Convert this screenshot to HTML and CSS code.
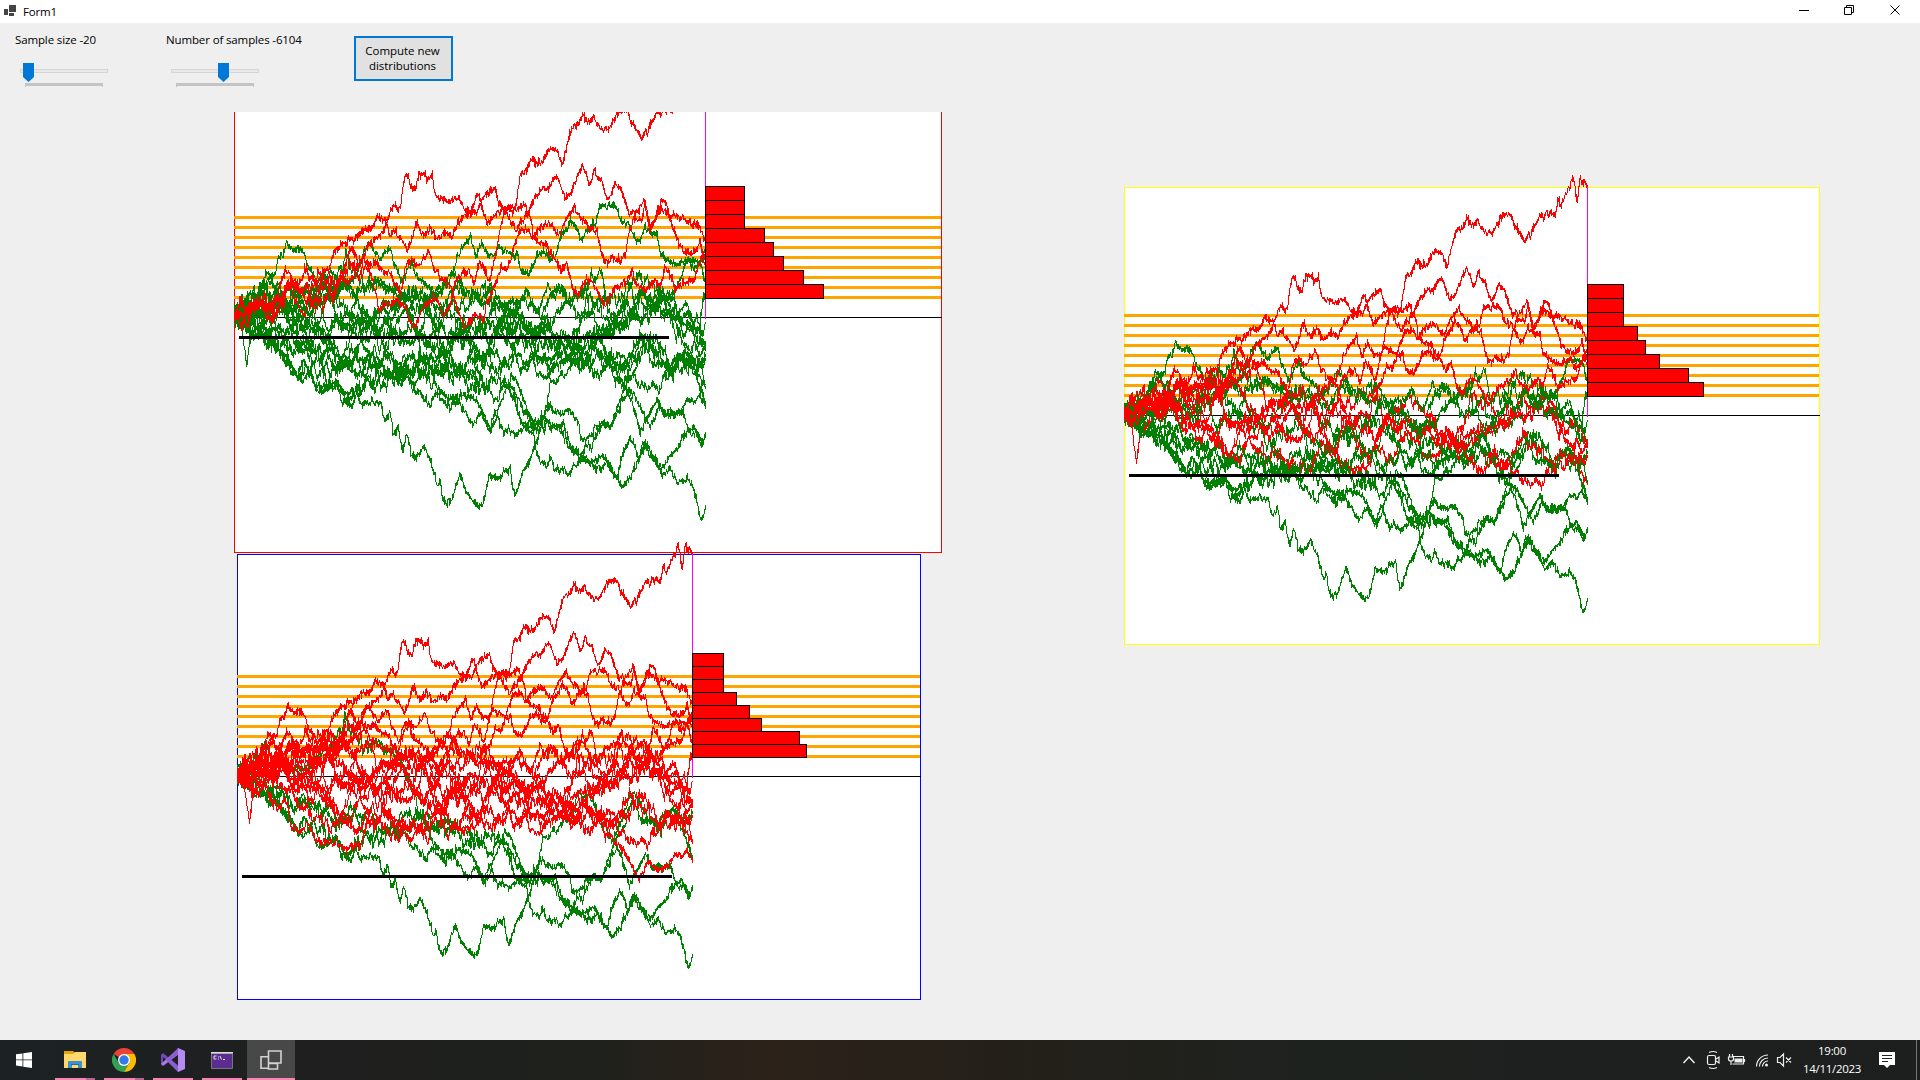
FILE: index.html
```html
<!DOCTYPE html>
<html lang="en">
<head>
<meta charset="utf-8">
<title>Form1</title>
<link rel="stylesheet" href="styles.css">
</head>
<body>
<header class="titlebar">
  <svg class="app-icon" width="14" height="12" viewBox="0 0 14 12"><path fill="#444" d="M0 4h4v6H0zM5 0h7v7H5zM5 8h5v3H5z"/></svg>
  <span class="caption">Form1</span>
  <div class="window-buttons">
    <svg width="46" height="22" viewBox="0 0 46 22"><path d="M17 10.5h10" stroke="#000" fill="none"/></svg>
    <svg width="46" height="22" viewBox="0 0 46 22"><path d="M16.500 7.500h7v7h-7zM18.500 7.500v-2h7v7h-2" stroke="#000" fill="none"/></svg>
    <svg width="46" height="22" viewBox="0 0 46 22"><path d="M16.500 5.500l9 9m0-9l-9 9" stroke="#000" fill="none"/></svg>
  </div>
</header>
<main class="form">
  <section class="controls">
    <div class="field field-size">
      <label class="lbl">Sample size -20</label>
      <svg class="slider" width="90" height="26" viewBox="0 0 90 26"><rect x=".5" y="6.500" width="87" height="3" fill="#e7eaea" stroke="#d6d6d6"/><path d="M5 20h78v4h-1v-1H6v1H5z" fill="#c4c4c4"/><path d="M3 0h11v14l-5.500 5L3 14z" fill="#0078d7"/></svg>
    </div>
    <div class="field field-count">
      <label class="lbl lbl-count">Number of samples -6104</label>
      <svg class="slider" width="90" height="26" viewBox="0 0 90 26"><rect x=".5" y="6.500" width="87" height="3" fill="#e7eaea" stroke="#d6d6d6"/><path d="M5 20h78v4h-1v-1H6v1H5z" fill="#c4c4c4"/><path d="M47 0h11v14l-5.500 5L47 14z" fill="#0078d7"/></svg>
    </div>
    <button class="compute">Compute new<br>distributions</button>
  </section>
  <svg id="plots" class="plots" width="1920" height="928" viewBox="0 112 1920 928" shape-rendering="crispEdges"></svg>
</main>
<footer class="taskbar">
  <div class="tasks">
    <div class="task start"><svg width="16" height="16" viewBox="0 0 16 16"><path fill="#fff" d="M0 2.300L6.500 1.400V7.500H0zM7.300 1.300L16 0v7.500H7.300zM0 8.300h6.500v6.200L0 13.600zM7.300 8.300H16V16l-8.700-1.300z"/></svg></div>
    <div class="task multi"><svg width="22" height="20" viewBox="0 0 22 20"><path fill="#e5a50a" d="M0 1h9l2 2v4H0z"/><path fill="#ffd76b" d="M0 4h9l2-2h11v16H0z"/><path fill="#3b91d6" d="M4 18v-6q0-1 1-1h12q1 0 1 1v6h-4v-3H8v3z"/><path fill="#1b6cb5" d="M7 14h8v1H7z"/></svg></div>
    <div class="task multi"><svg width="24" height="24" viewBox="0 0 24 24"><path fill="#ea4335" d="M12 12L1.600 6A12 12 0 0 1 22.400 6z"/><path fill="#34a053" d="M6.800 15L12 17.500 17.200 15 12 24A12 12 0 0 1 1.600 6z"/><path fill="#fbbc05" d="M12 6h10.400A12 12 0 0 1 12 24l5.200-9z"/><circle cx="12" cy="12" r="6" fill="#fff"/><circle cx="12" cy="12" r="4.700" fill="#3578ea"/></svg></div>
    <div class="task single"><svg width="24" height="24" viewBox="0 0 24 24"><path fill="#7049b5" d="M0 7l2-2 16 13v6L2 9v8l-2-1z"/><path fill="#a77ce8" d="M0 16l2 2 16-12V0L2 14z"/><path fill="#8b5fd0" d="M5 12L17 0v6l-7 6 7 6v6z"/><path fill="#b58bf0" d="M17 0l7 3v18l-7 3z"/></svg></div>
    <div class="task single"><svg width="22" height="17" viewBox="0 0 22 17"><path fill="#5c2d91" stroke="#777" d="M.5 1.500h21v15H.5z"/><path fill="#ddd" d="M0 0h22v1.500H0z"/><path stroke="#ddd" fill="none" d="M5.500 4H3v3h2.500M7.500 4.500v1M7.500 6.500v1M9 4l1.500 3.500M12 7.500h2"/></svg></div>
    <div class="task active"><svg width="22" height="20" viewBox="0 0 22 20"><path stroke="#d2d2d2" stroke-width="1.600" fill="none" d="M8.500 1h12.500v12H8.500zM8 6.800H1v11.500h7.500M8 13.500h9.500v5.500H8.500v-6"/></svg></div>
  </div>
  <div class="tray">
    <svg class="tray-icons" width="113" height="24" viewBox="0 0 113 24" fill="none" stroke="#eee" stroke-width="1.200">
      <path stroke-width="1.500" d="M3.500 15l5.500-6 5.500 6"/>
      <path d="M29 7.500h5q1.500 0 1.500 1.500v6q0 1.500-1.500 1.500h-5q-1.500 0-1.500-1.500V9q0-1.500 1.500-1.500zM36 11l3-2v6l-3-2M29 4.500q4-2 8 0M29 19.500q4 2 8 0"/>
      <path d="M53 8.500h10.500v7.500H52.500M64.500 11v3"/><path fill="#eee" stroke="none" d="M54.500 10.500h8v4h-8z"/><path d="M49.500 6v3M52.500 6v3M48.500 9h5v2q0 2-2.500 2t-2.500-2zM51 13v4"/>
      <path d="M76.500 18.500A11.500 11.500 0 0 1 88 7M79.500 18.500A8.500 8.500 0 0 1 88 10M82.500 18.500A5.500 5.500 0 0 1 88 13"/><circle cx="86.500" cy="17" r="1.500" fill="#eee" stroke="none"/>
      <path d="M97.500 9.500h2.500l3.500-3.500v12l-3.500-3.500h-2.500zM106 9.500l5 5m0-5l-5 5"/>
    </svg>
    <div class="clock"><span>19:00</span><span>14/11/2023</span></div>
    <svg class="notice" width="16" height="16" viewBox="0 0 16 16"><path fill="#fff" d="M0 0h16v13h-5l-3 3-3-3H0z"/><path stroke="#222" d="M3 3.500h10M3 6.500h10M3 9.500h6"/></svg>
    <span class="show-desktop"></span>
  </div>
</footer>
<script src="plots.js"></script>
</body>
</html>
```
FILE: styles.css
```css
* { box-sizing: border-box; }
body {
  margin: 0;
  width: 1920px;
  height: 1080px;
  overflow: hidden;
  display: flex;
  flex-direction: column;
  background: #efefef;
  color: #000;
  font: 12px/15px "Open Sans", "Noto Sans", sans-serif;
}
svg { display: block; flex: none; }
.titlebar {
  height: 23px;
  flex: none;
  display: flex;
  background: #fff;
}
.app-icon { margin: 5px 5px 0 4px; }
.caption { padding-top: 4px; font-size: 11.5px; letter-spacing: -0.2px; }
.window-buttons { display: flex; margin-left: auto; }
.form { height: 1017px; flex: none; }
.controls { height: 89px; display: flex; align-items: flex-start; }
.field { padding-top: 9px; }
.field-size { width: 151px; padding-left: 15px; }
.field-count { width: 203px; padding-left: 15px; }
.lbl {
  display: block;
  height: 15px;
  white-space: nowrap;
  font-size: 11.5px;
  letter-spacing: -0.13px;
}
.slider { margin: 16px 0 0 5px; }
.compute {
  width: 99px;
  height: 45px;
  margin-top: 13px;
  padding: 0 2px 2px 0;
  border: 2px solid #0078d7;
  background: #e1e1e1;
  color: #000;
  font: 11.5px/15px "Open Sans", "Noto Sans", sans-serif;
  letter-spacing: -0.05px;
}
.plots { overflow: hidden; }
.taskbar {
  height: 40px;
  flex: none;
  display: flex;
  justify-content: space-between;
  background: linear-gradient(90deg, #1c2224 0, #1f1f1f 16%, #1e211c 30%, #2c221a 40%, #242019 52%, #1e221f 68%, #1d1f1e 100%);
  color: #fff;
}
.tasks { display: flex; gap: 1px; }
.task {
  width: 48px;
  height: 40px;
  display: flex;
  align-items: center;
  justify-content: center;
  border-bottom: 2px solid transparent;
  padding-top: 2px;
}
.task.start { width: 50px; padding-right: 2px; }
.single { background: linear-gradient(#f884b4, #f884b4) 4px 38px / 40px 2px no-repeat border-box; }
.multi { background: linear-gradient(90deg, #f884b4 31px, #b8688f 31px) 4px 38px / 40px 2px no-repeat border-box; }
.task.active { background: #484848; border-bottom-color: #f884b4; }
.tray { display: flex; align-items: center; }
.tray-icons { margin-right: 3px; }
.clock {
  width: 72px;
  display: flex;
  flex-direction: column;
  align-items: center;
  font-size: 11.5px;
  line-height: 18px;
  letter-spacing: -0.3px;
  margin-right: 11px;
}
.notice { margin-right: 21px; }
.show-desktop { width: 4px; height: 40px; border-left: 1px solid #777; }
```
FILE: plots.js
```js
// Each walk: colour in the red, yellow and blue plot, then "x,y" knots
// (three units per pixel; x runs 42..1456, the axis sits at y = 652).
const walks = [
["ggg","42,660 100,690 160,720 200,770 230,830 270,820 285,870 310,880 345,840 370,890 395,910 410,870 425,920 455,900 480,915 495,965 507,930 520,1010 532,990 547,1045 560,1000 572,1060 585,1070 610,1035 625,1070 645,1120 652,1150 658,1130 665,1190 675,1215 695,1190 713,1130 725,1140 745,1190 770,1207 787,1207 800,1150 805,1115 820,1130 840,1130 855,1100 870,1100 880,1170 890,1170 905,1120 925,1090 945,1040 965,960 980,920 990,850 1010,845 1040,810 1060,790 1085,760 1100,700 1130,710 1180,790 1215,860 1230,830 1245,800 1275,680 1290,720 1320,790 1350,800 1385,770 1425,810 1440,870 1456,900"],
["ggg","42,660 90,650 160,750 210,800 250,780 300,830 340,850 380,905 420,880 450,820 500,840 545,830 575,860 600,880 630,920 645,890 680,920 730,900 760,970 780,940 810,990 830,940 850,995 885,990 910,980 940,1000 950,1060 960,1095 980,1100 993,1075 1005,1100 1040,1120 1060,1090 1090,1070 1110,1085 1140,1110 1160,1070 1180,1120 1200,1155 1225,1145 1240,1100 1260,1060 1280,1030 1300,1080 1335,1120 1350,1100 1370,1140 1400,1130 1415,1150 1425,1190 1443,1252 1456,1220"],
["ggg","42,660 100,640 150,700 220,760 280,740 330,800 390,780 450,840 510,830 570,800 620,760 650,860 680,890 740,870 765,900 790,940 810,980 830,930 850,880 865,850 885,870 910,930 940,980 960,960 985,920 1020,930 1050,930 1070,960 1085,1010 1120,990 1145,960 1170,980 1200,920 1215,850 1240,780 1265,700 1290,780 1320,800 1360,830 1400,770 1430,800 1456,760"],
["ggg","42,640 80,600 130,560 170,600 240,640 300,590 380,500 430,550 470,540 510,580 560,640 600,760 640,800 700,820 750,860 800,880 860,840 900,940 930,980 990,970 1030,1000 1060,1060 1090,1080 1120,1080 1150,1060 1170,1100 1190,1130 1205,1060 1225,1020 1240,1030 1255,1080 1275,1030 1295,1070 1330,1110 1350,1060 1380,1030 1400,990 1420,980 1445,1040 1456,1010"],
["ggg","42,660 110,690 170,740 240,720 320,740 380,800 440,790 500,830 540,800 600,750 650,790 700,830 740,830 790,880 830,870 880,800 900,860 930,960 970,970 1010,970 1050,1040 1080,1060 1120,1030 1150,970 1170,980 1200,910 1220,880 1235,910 1260,980 1290,940 1310,900 1330,950 1360,940 1390,940 1410,1000 1430,990 1450,1040 1456,1000"],
["ggr","42,650 100,690 140,690 190,760 230,830 260,800 285,860 320,870 350,850 380,890 410,870 450,800 500,780 560,810 580,860 610,830 660,770 720,700 800,680 880,690 930,720 950,820 985,840 1010,780 1060,750 1110,740 1170,800 1215,850 1235,870 1265,930 1290,970 1315,930 1345,945 1370,930 1400,905 1420,915 1440,890 1456,930"],
["grr","42,650 90,620 150,560 200,610 250,620 300,680 350,760 380,780 420,720 450,760 510,780 560,800 610,800 650,760 700,790 750,790 780,810 820,760 860,790 900,690 960,780 1020,740 1080,730 1150,770 1220,800 1260,700 1330,800 1390,780 1456,840"],
["ggr","42,650 85,630 130,670 200,600 260,650 310,570 370,640 430,690 480,740 550,700 600,730 660,780 720,700 780,770 850,690 910,810 960,720 1020,760 1090,780 1140,690 1200,680 1260,640 1330,590 1370,650 1400,640 1440,640 1450,580 1456,590"],
["grr","42,650 62,690 79,792 90,710 110,680 130,650 190,640 250,680 320,620 370,680 440,650 490,690 550,660 610,700 680,640 740,620 800,580 860,680 930,690 1000,740 1050,730 1100,600 1150,610 1200,680 1270,610 1330,580 1360,640 1390,740 1456,750"],
["ggr","42,650 100,690 160,630 220,670 280,600 340,680 410,620 470,700 530,630 570,590 630,640 700,700 770,720 830,610 890,670 950,700 990,560 1050,590 1100,620 1160,690 1220,640 1290,570 1350,600 1410,660 1456,730"],
["grr","42,650 90,600 160,590 230,680 300,720 360,750 420,690 480,640 540,650 590,600 640,650 700,640 750,730 800,770 860,650 920,590 960,640 1000,710 1060,740 1120,690 1160,720 1210,620 1260,660 1320,620 1370,670 1420,670 1456,730"],
["ggr","42,650 120,660 180,690 240,760 290,770 330,830 370,780 420,830 480,790 530,840 590,800 640,820 700,820 740,780 790,790 850,770 890,740 920,810 950,770 1000,810 1050,780 1100,790 1170,770 1230,810 1290,710 1350,790 1400,790 1456,820"],
["grr","42,650 120,600 200,640 270,690 330,670 390,650 440,730 510,680 560,740 620,650 680,740 740,660 810,710 880,680 940,730 990,690 1040,700 1090,780 1140,800 1190,780 1250,850 1320,855 1370,760 1430,790 1456,790"],
["ggr","42,650 100,590 140,520 170,550 220,580 270,600 330,520 350,540 400,580 430,550 470,535 500,570 550,560 600,590 660,620 720,580 800,590 820,575 850,640 890,600 920,590 950,640 985,560 1000,590 1025,570 1050,610 1140,530 1160,610 1210,590 1260,530 1280,590 1320,580 1340,600 1370,560 1390,510 1400,490 1430,480 1440,490 1456,550"],
["ggr","42,650 100,620 120,560 150,520 165,515 172,475 185,470 200,430 215,460 245,455 260,500 290,540 330,560 370,560 400,540 415,500 430,460 450,430 465,460 495,455 510,435 520,500 545,550 560,500 575,490 585,530 620,550 640,590 665,570 690,525 725,550 745,580 780,600 830,610 890,690 950,690 1010,670 1040,600 1100,620 1160,650 1230,590 1310,600 1370,640 1400,600 1456,690"],
["grr","42,650 110,630 190,610 260,570 330,590 380,560 450,640 520,610 600,600 660,580 690,530 710,480 730,450 750,415 765,465 785,430 800,460 825,460 840,430 860,460 890,460 905,520 925,520 950,470 970,450 985,480 1005,470 1020,410 1050,370 1070,390 1085,420 1110,380 1125,370 1140,320 1160,325 1180,305 1200,330 1215,360 1225,360 1240,410 1260,410 1275,370 1290,400 1310,420 1320,470 1345,490 1365,490 1395,490 1420,500 1440,490 1456,440"],
["rrr","42,660 60,600 85,620 120,600 150,630 200,530 225,570 260,560 310,590 350,540 390,475 430,500 450,520 465,580 475,635 500,620 530,600 555,625 575,680 590,660 610,620 630,600 650,600 665,635 690,610 700,560 715,530 730,510 745,500 760,540 775,490 815,500 830,440 850,350 865,320 885,320 910,310 930,350 940,400 960,380 985,370 1000,385 1015,410 1030,370 1060,330 1080,350 1095,370 1110,400 1130,400 1140,450 1160,485 1190,475 1200,490 1215,460 1225,390 1240,350 1265,370 1275,310 1290,380 1310,350 1325,300 1345,340 1370,350 1390,350 1400,370 1430,380 1440,390 1456,420"],
["rrr","42,640 60,680 100,610 160,650 200,570 250,620 290,560 340,570 390,490 445,520 470,490 490,520 510,520 525,560 540,580 555,500 575,480 600,490 625,455 640,510 660,540 690,560 715,640 730,680 755,655 790,660 800,600 815,560 830,540 845,490 860,500 880,440 900,395 920,385 940,410 965,420 980,430 1000,470 1020,510 1040,490 1055,560 1075,590 1085,570 1100,525 1125,560 1150,620 1180,575 1200,550 1220,545 1235,510 1250,550 1280,560 1300,540 1320,550 1335,500 1350,540 1365,575 1395,545 1420,545 1435,500 1445,470 1456,480"],
["rrr","42,650 70,640 130,590 165,640 200,560 240,560 260,620 310,530 350,560 380,545 410,500 430,460 445,430 460,420 480,400 497,360 510,400 517,385 535,405 560,440 575,420 587,370 610,410 630,385 650,415 675,385 695,405 710,370 730,350 750,340 770,345 785,300 800,280 825,262 835,300 860,350 890,370 910,350 925,320 940,290 970,265 985,270 1010,235 1030,285 1050,290 1065,245 1085,195 1107,250 1125,205 1145,240 1160,300 1185,250 1200,270 1230,340 1245,345 1270,310 1280,350 1290,400 1310,330 1325,320 1350,350 1375,430 1400,450 1425,465 1440,430 1450,480 1456,490"],
["rrr","42,650 60,600 75,640 100,600 130,630 160,600 190,620 200,550 230,560 250,520 290,490 325,500 345,450 360,415 375,440 385,405 400,420 415,395 450,395 463,370 480,355 500,350 515,322 537,328 553,238 565,240 570,268 585,275 597,235 612,220 625,235 635,225 645,295 670,290 690,305 710,295 725,320 745,335 760,315 775,268 790,325 798,355 815,350 850,320 885,320 900,245 925,200 950,190 965,190 985,155 1010,145 1027,185 1040,130 1060,80 1072,70 1087,45 1100,65 1115,50 1120,32 1125,45 1145,85 1170,85 1180,60 1195,42 1215,37 1235,80 1255,100 1265,115 1280,105 1300,70 1310,35 1325,58 1340,40 1357,38 1366,-12 1376,8 1387,-23 1402,-49 1412,-74 1425,-12 1433,-80 1447,-68 1456,-55"]
];

const charts = [
  { key: 0, frame: "red", x: 234, top: 82, w: 707, h: 470, axis: 317, plot: 471, ref: 336, bin: 14, first: -131, bars: [39,39,39,59,68,78,98,118] },
  { key: 2, frame: "blue", x: 237, top: 554, w: 683, h: 445, axis: 776, plot: 455, ref: 875, bin: 13, first: -123, bars: [31,31,31,44,57,69,107,114] },
  { key: 1, frame: "yellow", x: 1124, top: 187, w: 695, h: 457, axis: 415, plot: 463, ref: 474, bin: 14, first: -131, bars: [36,36,36,50,58,72,101,116] }
];

let seed = 7;
function rnd() {
  seed = (seed * 1664525 + 1013904223) % 4294967296;
  return seed / 4294967296 - 0.5;
}

function sample(text) {
  const knots = text.split(" ").map(p => p.split(",").map(Number));
  const out = [];
  let drift = 0, k = 0;
  for (let x = 42; x <= 1456; x += 1) {
    while (k < knots.length - 2 && x > knots[k + 1][0]) k++;
    const [x0, y0] = knots[k], [x1, y1] = knots[k + 1];
    const gap = x1 - x0;
    drift = drift * 0.93 + rnd() * (gap > 35 ? 22 : 9);
    const spike = rnd() * rnd() * 44;
    out.push([(x - 42) / 1414, (y0 + (y1 - y0) * (x - x0) / gap + drift + rnd() * 18 + spike - 652) / 3]);
  }
  return out;
}
const series = walks.map(([c, t]) => [c, sample(t)]);

const rect = (x, y, w, h, fill) => `<rect x="${x}" y="${y}" width="${w}" height="${h}" fill="${fill}"/>`;
const box = (x, y, w, h, fill, line) => `<rect x="${x + .5}" y="${y + .5}" width="${w}" height="${h}" fill="${fill}" stroke="${line}"/>`;

document.getElementById("plots").innerHTML = charts.map(c => {
  let s = box(c.x, c.top, c.w, c.h, "#fff", c.frame);
  for (let i = 0; i < 9; i++) s += rect(c.x, c.axis - 101 + 10 * i, c.w, 3, "orange");
  s += rect(c.x, c.axis, c.w + 1, 1, "#000");
  for (const [colors, pts] of series) {
    const line = pts.map(([u, v]) => `${Math.round(c.x + u * c.plot) + .5},${(c.axis + .5 + v * c.h / 470).toFixed(1)}`).join(" ");
    s += `<polyline points="${line}" fill="none" stroke="${colors[c.key] === "r" ? "red" : "green"}"/>`;
  }
  s += rect(c.x + c.plot, c.top, 1, c.axis - c.top + 2, "magenta");
  c.bars.forEach((w, i) => s += box(c.x + c.plot, c.axis + c.first + i * c.bin, w, c.bin, "red", "#000"));
  return s + rect(c.x + 5, c.ref, 430, 3, "#000");
}).join("");
```
